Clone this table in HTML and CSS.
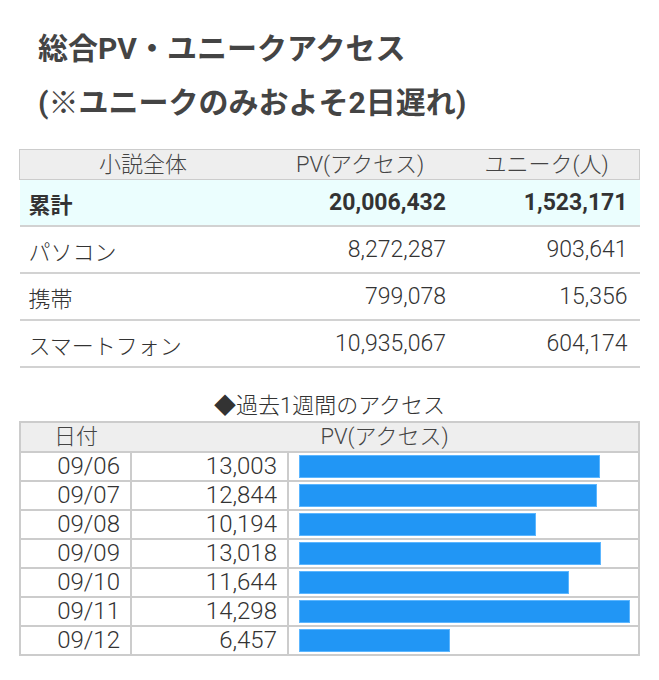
FILE: index.html
```html
<!DOCTYPE html>
<html lang="ja">
<head>
<meta charset="utf-8">
<link rel="stylesheet" href="styles.css">
</head>
<body>
<div class="page">
  <h1 class="title">総合PV・ユニークアクセス<br>(※ユニークのみおよそ2日遅れ)</h1>
  <table class="summary">
    <thead>
      <tr><th class="c1">小説全体</th><th class="c2">PV(アクセス)</th><th class="c3">ユニーク(人)</th></tr>
    </thead>
    <tbody>
      <tr class="total"><td class="label">累計</td><td class="num">20,006,432</td><td class="num">1,523,171</td></tr>
      <tr><td class="label">パソコン</td><td class="num">8,272,287</td><td class="num">903,641</td></tr>
      <tr><td class="label">携帯</td><td class="num">799,078</td><td class="num">15,356</td></tr>
      <tr><td class="label">スマートフォン</td><td class="num">10,935,067</td><td class="num">604,174</td></tr>
    </tbody>
  </table>
  <div class="caption">◆過去1週間のアクセス</div>
  <table class="weekly">
    <thead>
      <tr><th class="w1">日付</th><th colspan="2">PV(アクセス)</th></tr>
    </thead>
    <tbody>
      <tr><td class="date">09/06</td><td class="pv">13,003</td><td class="barcell"><div class="bar" style="width:90.94%"></div></td></tr>
      <tr><td class="date">09/07</td><td class="pv">12,844</td><td class="barcell"><div class="bar" style="width:89.83%"></div></td></tr>
      <tr><td class="date">09/08</td><td class="pv">10,194</td><td class="barcell"><div class="bar" style="width:71.30%"></div></td></tr>
      <tr><td class="date">09/09</td><td class="pv">13,018</td><td class="barcell"><div class="bar" style="width:91.05%"></div></td></tr>
      <tr><td class="date">09/10</td><td class="pv">11,644</td><td class="barcell"><div class="bar" style="width:81.44%"></div></td></tr>
      <tr><td class="date">09/11</td><td class="pv">14,298</td><td class="barcell"><div class="bar" style="width:100%"></div></td></tr>
      <tr><td class="date">09/12</td><td class="pv">6,457</td><td class="barcell"><div class="bar" style="width:45.16%"></div></td></tr>
    </tbody>
  </table>
</div>
</body>
</html>
```
FILE: styles.css
```css
html, body {
  margin: 0;
  padding: 0;
  background: #ffffff;
}
body {
  font-family: Roboto, "Noto Sans CJK JP", sans-serif;
  color: #333333;
}
.page {
  padding: 0 19px;
}
.title {
  margin: 22px 0 19px;
  padding-left: 19px;
  font-size: 30px;
  line-height: 54px;
  font-weight: bold;
  color: #444444;
}
table {
  border-collapse: collapse;
  width: 621px;
}
.summary thead tr {
  border: 1px solid #cccccc;
}
.summary th {
  background: #eeeeee;
  height: 29px;
  padding: 0;
  font-size: 22px;
  font-weight: 300;
  color: #444444;
  text-align: center;
  line-height: 29px;
}
.summary .c1 { width: 246px; }
.summary .c2 { width: 188px; }
.summary td {
  height: 45px;
  padding: 0;
  font-size: 22px;
  font-weight: 300;
  border-bottom: 2px solid #d2d2d2;
}
.summary .label {
  padding-left: 9px;
}
.summary .num {
  text-align: right;
  padding-right: 8px;
  font-size: 23px;
}
.summary td.num:last-child {
  padding-right: 12px;
}
.summary .total td {
  background: #ebfefe;
  font-weight: bold;
  color: #333333;
}
.caption {
  margin: 23px 0 0;
  text-align: center;
  font-size: 22px;
  line-height: 30px;
  font-weight: 300;
  color: #333333;
}
.weekly {
  border: 2px solid #cccccc;
}
.weekly th {
  background: #eeeeee;
  height: 28px;
  padding: 0;
  font-size: 22px;
  font-weight: 300;
  color: #444444;
  line-height: 28px;
  text-align: center;
  border-bottom: 2px solid #cccccc;
}
.weekly .w1 { width: 110px; }
.weekly td {
  border: 2px solid #cccccc;
  height: 27px;
  padding: 0;
  font-size: 24px;
  font-weight: 300;
  line-height: 27px;
}
.weekly .date {
  text-align: right;
  padding-right: 10px;
  width: 98px;
}
.weekly .pv {
  text-align: right;
  padding-right: 10px;
  width: 145px;
}
.weekly .barcell {
  padding: 0 10px;
}
.bar {
  height: 21px;
  background: #2196f5;
  border: 1px solid #5cb6ff;
  box-sizing: content-box;
}
```
